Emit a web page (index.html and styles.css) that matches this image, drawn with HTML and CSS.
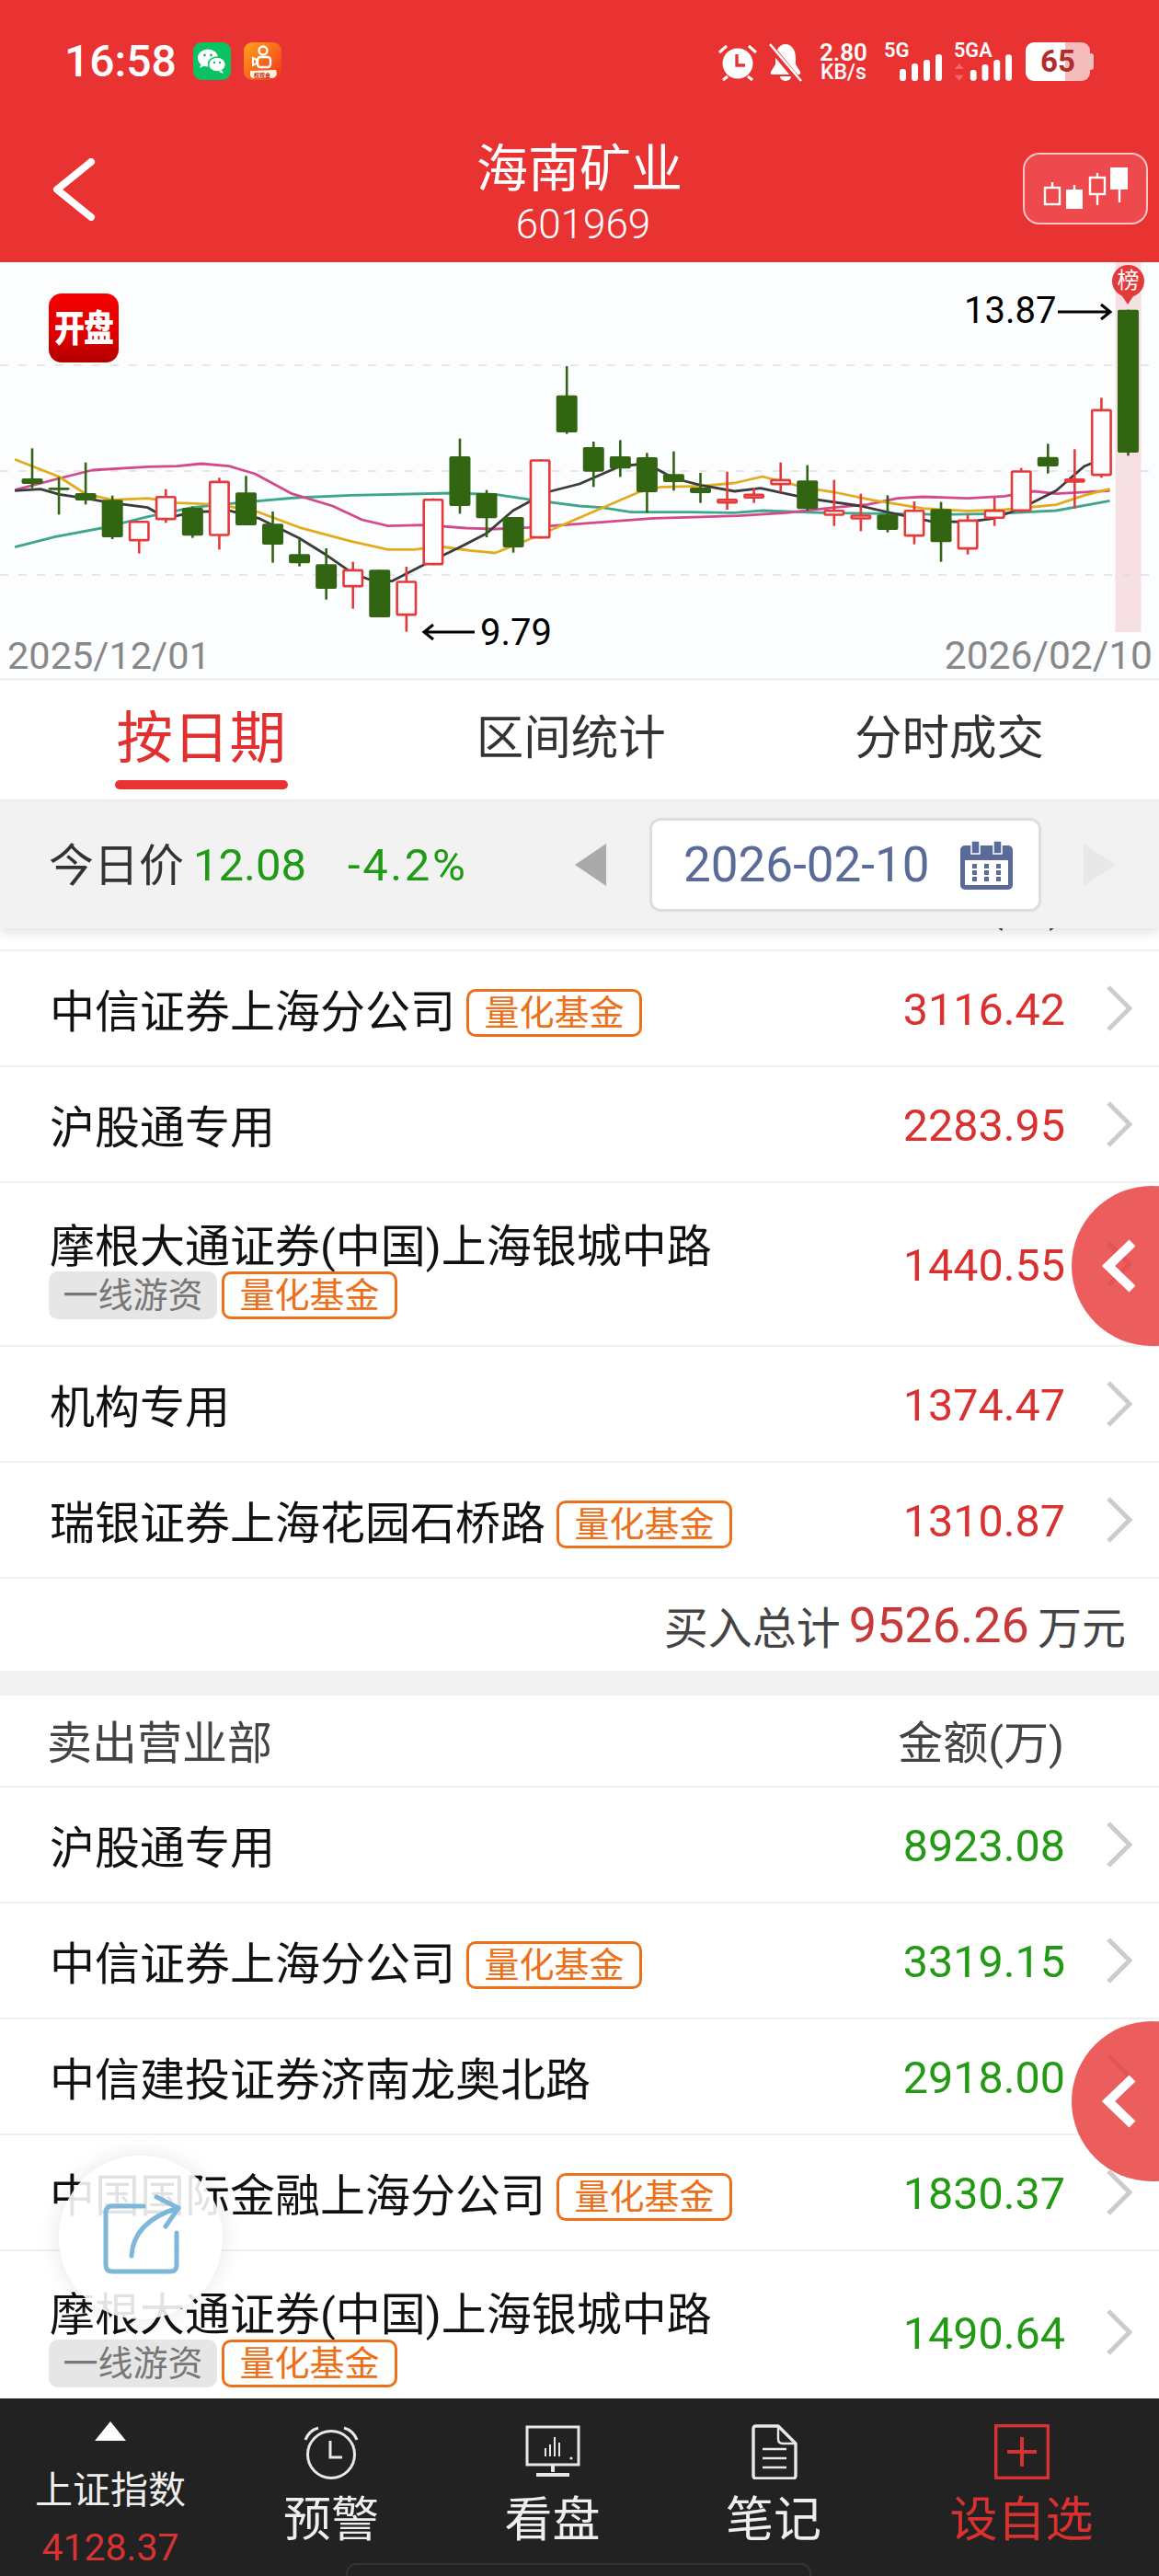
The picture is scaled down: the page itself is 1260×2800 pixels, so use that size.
FILE: index.html
```html
<!DOCTYPE html>
<html lang="zh-CN">
<head>
    <meta charset="UTF-8">
    <meta name="viewport" content="width=device-width, initial-scale=1.0">
    <title>海南矿业 - 龙虎榜</title>
    <link rel="stylesheet" href="styles.css">
</head>
<body>
<div class="page">

    <header class="top">
        <div class="status">
            <span class="clock">16:58</span>
            <svg class="app-icon" viewBox="0 0 41 41">
                <rect width="41" height="41" rx="9" fill="#0ac262"/>
                <ellipse cx="16" cy="17" rx="11" ry="9.5" fill="#fff"/>
                <path d="M9 23l-2 5 6-3z" fill="#fff"/>
                <ellipse cx="26" cy="24" rx="9.5" ry="8" fill="#fff" stroke="#0ac262" stroke-width="1.5"/>
                <path d="M31 30l2 4-5-2z" fill="#fff"/>
                <circle cx="12.5" cy="14" r="1.4" fill="#0ac262"/>
                <circle cx="19.5" cy="14" r="1.4" fill="#0ac262"/>
                <circle cx="23" cy="22" r="1.2" fill="#0ac262"/>
                <circle cx="29" cy="22" r="1.2" fill="#0ac262"/>
            </svg>
            <svg class="app-icon app-icon-second" viewBox="0 0 41 41">
                <defs>
                    <linearGradient id="kuai" x1="0" y1="0" x2="1" y2="1">
                        <stop offset="0" stop-color="#ffa51a"/>
                        <stop offset="1" stop-color="#f2301f"/>
                    </linearGradient>
                </defs>
                <rect width="41" height="41" rx="9" fill="url(#kuai)"/>
                <circle cx="21" cy="9" r="4.5" fill="none" stroke="#fff" stroke-width="2.4"/>
                <rect x="15" y="16" width="14" height="11" rx="3" fill="none" stroke="#fff" stroke-width="2.4"/>
                <path d="M14 19l-4-2v8l4-2z" fill="none" stroke="#fff" stroke-width="2"/>
                <path d="M7 31l28-1 1 4q-1 5-6 5H11q-4 0-4-4z" fill="#fff3dc"/>
                <text class="mini-label" x="20" y="37.5">权现金</text>
            </svg>

            <div class="status-right">
                <svg class="icon-alarm" viewBox="0 0 44 44">
                    <circle cx="22" cy="23" r="16.5" fill="#fff"/>
                    <path d="M21 13v12h9" fill="none" stroke="#e93333" stroke-width="3.4"/>
                    <path d="M2 11l8-7M42 11l-8-7M6 41l5-4M38 41l-5-4" stroke="#fff" stroke-width="3"/>
                </svg>
                <svg class="icon-bell" viewBox="0 0 38 44">
                    <path d="M19 2c-7 0-11 7-11 15v7l-5 8q-1 3 2 3h28q3 0 2-3l-5-8v-7c0-8-4-15-11-15z" fill="#fff"/>
                    <path d="M13 37a6 5 0 0 0 12 0z" fill="#fff"/>
                    <path d="M2 4l33 40" stroke="#e93333" stroke-width="7"/>
                    <path d="M2 2l34 40" stroke="#fff" stroke-width="2.6"/>
                </svg>
                <div class="speed"><b>2.80</b><span>KB/s</span></div>
                <svg class="icon-sim" viewBox="0 0 64 44">
                    <text class="sim-text" x="0" y="16">5G</text>
                    <rect x="17" y="29" width="7" height="13" rx="3" fill="#fff"/>
                    <rect x="30" y="23" width="7" height="19" rx="3" fill="#fff"/>
                    <rect x="43" y="19" width="7" height="23" rx="3" fill="#fff"/>
                    <rect x="56" y="13" width="7" height="29" rx="3" fill="#fff"/>
                </svg>
                <svg class="icon-sim" viewBox="0 0 65 44">
                    <text class="sim-text" x="0" y="16">5GA</text>
                    <path d="M6 23l5 6H1zM6 42l5-6H1z" fill="#f2696b"/>
                    <rect x="18" y="30" width="7" height="12" rx="3" fill="#fff"/>
                    <rect x="31" y="24" width="7" height="18" rx="3" fill="#fff"/>
                    <rect x="44" y="19" width="7" height="23" rx="3" fill="#fff"/>
                    <rect x="57" y="13" width="7" height="29" rx="3" fill="#fff"/>
                </svg>
                <div class="battery">65</div>
            </div>
        </div>

        <div class="titlebar">
            <svg class="back" viewBox="0 0 48 68">
                <path d="M43 4L6 34l37 30" fill="none" stroke="#fff" stroke-width="8" stroke-linecap="round" stroke-linejoin="round"/>
            </svg>
            <div class="title">
                <h1>海南矿业</h1>
                <p>601969</p>
            </div>
            <div class="kline-btn">
                <svg viewBox="1115 168 132 74">
                    <g fill="none" stroke="#fff" stroke-width="2.4">
                        <rect x="1137" y="204" width="16" height="18"/>
                        <rect x="1186" y="193" width="16" height="18"/>
                    </g>
                    <g stroke="#fff" stroke-width="2.4">
                        <path d="M1145 198v6M1169 201v6M1194 188v5M1194 211v12M1218 206v14"/>
                    </g>
                    <rect x="1160" y="206" width="18" height="21" fill="#fff"/>
                    <rect x="1208" y="182" width="19" height="24" fill="#fff"/>
                </svg>
            </div>
        </div>
    </header>

    <section class="chart">
        <svg id="klineChart" class="chart-svg" viewBox="0 285 1260 452"></svg>
        <div class="open-badge"><span>开盘</span></div>
        <div class="pin">榜</div>
        <span class="mark mark-high">13.87</span>
        <span class="mark mark-low">9.79</span>
        <span class="axis-date axis-start">2025/12/01</span>
        <span class="axis-date axis-end">2026/02/10</span>
    </section>

    <nav class="tabs">
        <a class="tab tab-on">按日期</a>
        <a class="tab">区间统计</a>
        <a class="tab">分时成交</a>
    </nav>

    <div class="daybar">
        <span class="day-label">今日价</span>
        <span class="day-price">12.08</span>
        <span class="day-change">-4.2%</span>
        <i class="tri tri-left"></i>
        <div class="datebox">
            <span>2026-02-10</span>
            <svg class="calendar" viewBox="0 0 57 53">
                <rect x="0" y="5" width="57" height="48" rx="5" fill="#5a6b99"/>
                <rect x="12" y="0" width="9" height="14" fill="#5a6b99" stroke="#fff" stroke-width="1.5"/>
                <rect x="36" y="0" width="9" height="14" fill="#5a6b99" stroke="#fff" stroke-width="1.5"/>
                <rect x="5" y="21" width="47" height="27" fill="#fff"/>
                <g fill="#5a6b99">
                    <rect x="13" y="25" width="5" height="5"/><rect x="26" y="25" width="5" height="5"/><rect x="39" y="25" width="5" height="5"/>
                    <rect x="13" y="32" width="5" height="5"/><rect x="26" y="32" width="5" height="5"/><rect x="39" y="32" width="5" height="5"/>
                    <rect x="13" y="39" width="5" height="5"/><rect x="26" y="39" width="5" height="5"/><rect x="39" y="39" width="5" height="5"/>
                </g>
            </svg>
        </div>
        <i class="tri tri-right"></i>
    </div>

    <main class="list">
        <div class="list-scroll">
            <div class="row row-head row-head-first">
                <span class="head-name">买入营业部</span>
                <span class="head-amount">金额(万)</span>
            </div>
            <div class="row">
                <div class="name">中信证券上海分公司<span class="tag tag-quant">量化基金</span></div>
                <span class="value up">3116.42</span>
                <svg class="chev" viewBox="0 0 28 50"><path d="M2 2l23 23L2 48"/></svg>
            </div>
            <div class="row">
                <div class="name">沪股通专用</div>
                <span class="value up">2283.95</span>
                <svg class="chev" viewBox="0 0 28 50"><path d="M2 2l23 23L2 48"/></svg>
            </div>
            <div class="row row-tall">
                <div class="name-stack">
                    <div class="name">摩根大通证券(中国)上海银城中路</div>
                    <div class="tags"><span class="tag tag-hot">一线游资</span><span class="tag tag-quant">量化基金</span></div>
                </div>
                <span class="value up">1440.55</span>
                <svg class="chev" viewBox="0 0 28 50"><path d="M2 2l23 23L2 48"/></svg>
            </div>
            <div class="row">
                <div class="name">机构专用</div>
                <span class="value up">1374.47</span>
                <svg class="chev" viewBox="0 0 28 50"><path d="M2 2l23 23L2 48"/></svg>
            </div>
            <div class="row">
                <div class="name">瑞银证券上海花园石桥路<span class="tag tag-quant">量化基金</span></div>
                <span class="value up">1310.87</span>
                <svg class="chev" viewBox="0 0 28 50"><path d="M2 2l23 23L2 48"/></svg>
            </div>
            <div class="total">买入总计<b>9526.26</b>万元</div>

            <div class="row row-head">
                <span class="head-name">卖出营业部</span>
                <span class="head-amount">金额(万)</span>
            </div>
            <div class="row">
                <div class="name">沪股通专用</div>
                <span class="value down">8923.08</span>
                <svg class="chev" viewBox="0 0 28 50"><path d="M2 2l23 23L2 48"/></svg>
            </div>
            <div class="row">
                <div class="name">中信证券上海分公司<span class="tag tag-quant">量化基金</span></div>
                <span class="value down">3319.15</span>
                <svg class="chev" viewBox="0 0 28 50"><path d="M2 2l23 23L2 48"/></svg>
            </div>
            <div class="row">
                <div class="name">中信建投证券济南龙奥北路</div>
                <span class="value down">2918.00</span>
                <svg class="chev" viewBox="0 0 28 50"><path d="M2 2l23 23L2 48"/></svg>
            </div>
            <div class="row">
                <div class="name">中国国际金融上海分公司<span class="tag tag-quant">量化基金</span></div>
                <span class="value down">1830.37</span>
                <svg class="chev" viewBox="0 0 28 50"><path d="M2 2l23 23L2 48"/></svg>
            </div>
            <div class="row row-tall">
                <div class="name-stack">
                    <div class="name">摩根大通证券(中国)上海银城中路</div>
                    <div class="tags"><span class="tag tag-hot">一线游资</span><span class="tag tag-quant">量化基金</span></div>
                </div>
                <span class="value down">1490.64</span>
                <svg class="chev" viewBox="0 0 28 50"><path d="M2 2l23 23L2 48"/></svg>
            </div>
        </div>
    </main>

    <footer class="bottom">
        <div class="nav-item nav-index">
            <i class="nav-tri"></i>
            <span class="index-name">上证指数</span>
            <span class="index-value">4128.37</span>
        </div>
        <div class="nav-item">
            <svg class="nav-icon" viewBox="0 0 60 60" fill="none" stroke="#e8e8e8" stroke-width="3">
                <circle cx="30" cy="33" r="25.5"/>
                <path d="M29 18v18h13"/>
                <path d="M2 17q4-10 14-13M58 17q-4-10-14-13"/>
            </svg>
            <span>预警</span>
        </div>
        <div class="nav-item">
            <svg class="nav-icon" viewBox="0 0 60 60" fill="none" stroke="#e8e8e8" stroke-width="3">
                <rect x="2" y="3" width="56" height="41"/>
                <path d="M30 44v8M12 55h36" stroke-width="4"/>
                <path d="M22 26v9M27 22v13M32 14v21M37 20v15" stroke-width="2"/>
                <circle cx="50" cy="37" r="1.6" fill="#e8e8e8" stroke="none"/>
            </svg>
            <span>看盘</span>
        </div>
        <div class="nav-item">
            <svg class="nav-icon" viewBox="0 0 60 60" fill="none" stroke="#e8e8e8" stroke-width="3.4">
                <path d="M8 5q0-3 3-3h24l19 19v35q0 3-3 3H11q-3 0-3-3z" stroke-linejoin="round"/>
                <path d="M35 2v14q0 5 5 5h14" stroke-width="2.4"/>
                <path d="M18 27h26M18 37h26M18 47h26" stroke-width="2.6"/>
            </svg>
            <span>笔记</span>
        </div>
        <div class="nav-item nav-add">
            <svg class="nav-icon" viewBox="0 0 60 60" fill="none" stroke="#d93030" stroke-width="3.4">
                <rect x="1.7" y="1.7" width="56.6" height="56.6"/>
                <path d="M14 30h32M30 14v32" stroke-width="4"/>
            </svg>
            <span>设自选</span>
        </div>
        <div class="home-line"></div>
    </footer>

    <div class="side-btn side-btn-top">
        <svg viewBox="0 0 40 60"><path d="M34 5L8 30l26 25" fill="none" stroke="#fff" stroke-width="10"/></svg>
    </div>
    <div class="side-btn side-btn-bottom">
        <svg viewBox="0 0 40 60"><path d="M34 5L8 30l26 25" fill="none" stroke="#fff" stroke-width="10"/></svg>
    </div>

    <div class="share">
        <svg viewBox="0 0 90 90" fill="none" stroke="#7db7d9" stroke-width="5" stroke-linecap="round" stroke-linejoin="round">
            <path d="M46 13H12q-7 0-7 7v57q0 7 7 7h63q7 0 7-7V42"/>
            <path d="M33 67q2-37 50-52"/>
            <path d="M60 3l24 12-14 20"/>
        </svg>
    </div>
</div>

<script>
    // zoomed pixel readings: x is 2.489 per px, y is 3 per px from the top of the crop at 280
    const scaleX = v => v / 2.489;
    const scaleY = v => 280 + v / 3;

    // [wick top, body top, body bottom, wick bottom, up?]
    const candles = [
        [622, 720, 738, 752, 0], [716, 750, 758, 838, 0], [668, 768, 792, 805, 0],
        [776, 790, 912, 918, 0], [858, 858, 925, 965, 1], [755, 777, 856, 865, 1],
        [812, 816, 907, 914, 0], [718, 728, 908, 952, 1], [712, 766, 873, 873, 0],
        [828, 868, 936, 995, 0], [918, 967, 997, 1007, 0], [948, 1000, 1080, 1115, 0],
        [992, 1016, 1075, 1145, 1], [1018, 1018, 1173, 1173, 0], [1008, 1054, 1168, 1220, 1],
        [785, 786, 1003, 1003, 1], [590, 648, 810, 835, 0], [758, 768, 850, 912, 0],
        [846, 846, 945, 962, 0], [658, 658, 916, 916, 1], [354, 449, 570, 575, 0],
        [600, 618, 698, 748, 0], [595, 648, 688, 715, 0], [637, 651, 765, 832, 0],
        [632, 706, 732, 760, 0], [702, 750, 768, 800, 0], [698, 786, 802, 822, 1],
        [750, 770, 786, 800, 1], [668, 722, 742, 765, 1], [677, 727, 820, 825, 0],
        [725, 822, 842, 875, 1], [770, 838, 854, 892, 1], [775, 838, 888, 896, 0],
        [795, 822, 910, 935, 1], [797, 820, 928, 992, 0], [838, 854, 952, 968, 1],
        [783, 822, 852, 875, 1], [686, 694, 828, 832, 1], [607, 650, 681, 704, 0],
        [625, 720, 734, 818, 1], [457, 494, 712, 718, 1], [170, 170, 636, 646, 0]
    ];

    const right = 1568;
    const lines = [
        { color: "#3fa68d", pts: [[40,944],[150,910],[275,882],[400,845],[520,815],[640,800],[800,783],[950,775],[1220,768],[1340,772],[1440,790],[1568,810],[right+60,815],[right+140,830],[right+300,830],[right+420,832],[right+495,825],[right+660,832],[right+833,835],[right+977,838],[right+1122,835],[right+1290,825],[right+1435,793]] },
        { color: "#d34a8a", pts: [[40,758],[160,720],[250,693],[400,682],[480,680],[545,672],[620,680],[690,705],[790,770],[900,810],[980,855],[1050,875],[1150,872],[1260,882],[1340,885],[1430,880],[1568,868],[right+200,850],[right+430,842],[right+560,832],[right+689,815],[right+780,805],[right+860,785],[right+930,780],[right+1050,785],[right+1150,778],[right+1230,762],[right+1290,770],[right+1435,760]] },
        { color: "#e2ac1c", pts: [[40,658],[160,715],[231,770],[303,790],[400,785],[480,800],[594,805],[700,830],[810,880],[950,925],[1050,952],[1120,952],[1190,942],[1270,955],[1340,963],[1420,925],[1568,848],[right+160,765],[right+220,748],[right+328,745],[right+420,735],[right+495,714],[right+617,752],[right+689,765],[right+790,790],[right+930,818],[right+1050,826],[right+1150,822],[right+1290,806],[right+1366,775],[right+1435,754]] },
        { color: "#3b3b3b", pts: [[40,760],[110,755],[160,772],[230,785],[303,800],[400,815],[450,850],[522,830],[620,825],[700,850],[810,915],[883,970],[955,1030],[1000,1050],[1060,1055],[1150,1000],[1243,945],[1316,900],[1388,825],[1480,765],[1568,738],[right+110,680],[right+182,672],[right+256,720],[right+328,742],[right+420,762],[right+490,752],[right+617,785],[right+761,810],[right+833,830],[right+950,860],[right+1050,862],[right+1122,850],[right+1194,818],[right+1290,760],[right+1366,680],[right+1435,648]] }
    ];

    let svg = '<rect x="1212.5" y="285" width="28" height="402" fill="#f6e0e4"/>';

    [397, 512, 625].forEach(y => {
        svg += `<line x1="0" x2="1260" y1="${y}" y2="${y}" stroke="#dedede" stroke-width="1.5" stroke-dasharray="9 11"/>`;
    });

    lines.forEach(line => {
        let pts = line.pts.map(p => scaleX(p[0]).toFixed(1) + "," + scaleY(p[1]).toFixed(1)).join(" ");
        svg += `<polyline points="${pts}" fill="none" stroke="${line.color}" stroke-width="2.8" stroke-linejoin="round"/>`;
    });

    candles.forEach((c, i) => {
        let x = 35 + 29.06 * i;
        let top = scaleY(c[1]);
        let bottom = scaleY(c[2]);
        let color = c[4] ? "#e53a3a" : "#326511";
        svg += `<line x1="${x}" x2="${x}" y1="${scaleY(c[0])}" y2="${scaleY(c[3])}" stroke="${color}" stroke-width="2.6"/>`;
        if (c[4]) {
            svg += `<rect x="${x - 10.2}" y="${top + 1.2}" width="20.4" height="${Math.max(bottom - top - 2.4, 1)}" rx="1" fill="#fcfdff" stroke="${color}" stroke-width="2.6"/>`;
        } else {
            svg += `<rect x="${x - 11.5}" y="${top}" width="23" height="${bottom - top}" rx="2" fill="${color}"/>`;
        }
    });

    // high and low markers
    svg += '<path d="M1150 339h56M1197 331l10 8-10 8" fill="none" stroke="#000" stroke-width="3"/>';
    svg += '<path d="M516 687h-54M471 679l-10 8 10 8" fill="none" stroke="#000" stroke-width="3"/>';

    document.getElementById("klineChart").innerHTML = svg;
</script>
</body>
</html>
```

FILE: styles.css
```css
* {
    box-sizing: border-box;
    margin: 0;
    padding: 0;
}
body {
    font-family: Roboto, "Noto Sans CJK SC", sans-serif;
    background-color: #fff;
    color: #111;
}
.page {
    position: relative;
    display: flex;
    flex-direction: column;
    width: 1260px;
    height: 2800px;
    overflow: hidden;
}

/* red header */
.top {
    height: 285px;
    background-color: #e93333;
    color: #fff;
}
.status {
    display: flex;
    align-items: flex-start;
    height: 135px;
    padding: 46px 0 0 70px;
}
.clock {
    font-size: 48px;
    font-weight: 500;
    line-height: 42px;
    width: 140px;
}
.app-icon {
    width: 41px;
    height: 41px;
}
.app-icon-second {
    margin-left: 14px;
}
.mini-label {
    font-size: 6px;
    font-weight: 700;
    fill: #c8261b;
    text-anchor: middle;
}
.status-right {
    display: flex;
    align-items: flex-start;
    margin-left: 474px;
}
.icon-alarm {
    width: 44px;
    height: 44px;
}
.icon-bell {
    width: 38px;
    height: 44px;
    margin-left: 11px;
}
.speed {
    display: flex;
    flex-direction: column;
    width: 58px;
    margin-left: 15px;
    text-align: center;
    line-height: 22px;
}
.speed b {
    font-size: 26px;
    font-weight: 600;
}
.speed span {
    font-size: 23px;
    font-weight: 500;
}
.icon-sim {
    width: 64px;
    height: 44px;
    margin-left: 15px;
}
.icon-sim + .icon-sim {
    margin-left: 12px;
}
.sim-text {
    font-size: 22px;
    font-weight: 600;
    fill: #fff;
}
.battery {
    position: relative;
    width: 70px;
    height: 42px;
    margin-left: 14px;
    border-radius: 9px;
    background: linear-gradient(90deg, #fff 62%, #f6bcbc 62%);
    color: #b22c2c;
    font-size: 33px;
    font-weight: 700;
    line-height: 42px;
    padding-left: 16px;
}
.battery::after {
    content: "";
    position: absolute;
    right: -4px;
    top: 12px;
    width: 4px;
    height: 18px;
    border-radius: 0 3px 3px 0;
    background-color: #f6bcbc;
}

.titlebar {
    display: grid;
    grid-template-columns: 1fr auto 1fr;
    align-items: start;
    padding: 0 12px 0 56px;
}
.back {
    width: 48px;
    height: 68px;
    margin-top: 37px;
}
.title {
    text-align: center;
    margin-left: -44px;
    padding-top: 17px;
}
.title h1 {
    font-size: 56px;
    font-weight: 400;
    line-height: 64px;
}
.title p {
    font-size: 44px;
    font-weight: 300;
    line-height: 50px;
    margin-top: 3px;
    margin-left: 8px;
}
.kline-btn {
    justify-self: end;
    width: 136px;
    height: 78px;
    margin-top: 31px;
    border: 2px solid #f5c4c4;
    border-radius: 18px;
    background-color: #ee4a4d;
}
.kline-btn svg {
    display: block;
    width: 100%;
    height: 100%;
}

/* k-line chart, a free canvas */
.chart {
    position: relative;
    height: 455px;
    background-color: #fcfdff;
    border-bottom: 3px solid #f0f0f0;
}
.chart-svg {
    display: block;
    width: 1260px;
    height: 452px;
}
.open-badge {
    position: absolute;
    left: 53px;
    top: 34px;
    display: flex;
    align-items: center;
    justify-content: center;
    width: 76px;
    height: 75px;
    border-radius: 14px;
    background: linear-gradient(180deg, #f50000 0%, #e00000 60%, #b00000 100%);
}
.open-badge span {
    color: #fff;
    font-size: 33px;
    font-weight: 900;
    line-height: 1;
    letter-spacing: -1px;
    transform: scaleY(1.22);
}
.pin {
    position: absolute;
    left: 1209px;
    top: 3px;
    width: 35px;
    height: 35px;
    border-radius: 50%;
    background-color: #e53a3a;
    color: #fff;
    font-size: 24px;
    line-height: 35px;
    text-align: center;
}
.pin::after {
    content: "";
    position: absolute;
    left: 9px;
    top: 31px;
    border-left: 8.5px solid transparent;
    border-right: 8.5px solid transparent;
    border-top: 12px solid #e53a3a;
}
.mark {
    position: absolute;
    font-size: 40px;
    line-height: 40px;
    color: #000;
}
.mark-high {
    left: 1048px;
    top: 33px;
}
.mark-low {
    left: 522px;
    top: 383px;
}
.axis-date {
    position: absolute;
    top: 407px;
    line-height: 41px;
    color: #888;
}
.axis-start {
    left: 8px;
    font-size: 41.5px;
}
.axis-end {
    right: 7px;
    font-size: 42.5px;
}

/* tabs */
.tabs {
    display: flex;
    justify-content: space-between;
    height: 129px;
    padding: 0 125px;
    background-color: #fff;
}
.tab {
    position: relative;
    font-size: 51.5px;
    line-height: 126px;
    color: #333;
}
.tab-on {
    font-size: 61.5px;
    padding: 0 1.5px;
    color: #e03030;
}
.tab-on::after {
    content: "";
    position: absolute;
    left: 0;
    right: 0;
    top: 108px;
    height: 10px;
    border-radius: 5px;
    background-color: #e93333;
}

/* today's price bar */
.daybar {
    position: relative;
    z-index: 2;
    display: flex;
    align-items: center;
    height: 140px;
    padding-left: 53px;
    background-color: #f2f2f2;
    border-top: 2px solid #ececec;
    box-shadow: 0 6px 10px rgba(0, 0, 0, 0.1);
}
.day-label {
    font-size: 49px;
    color: #333;
    width: 157px;
    margin-bottom: 8px;
}
.day-price,
.day-change {
    font-size: 49px;
    color: #1f9a14;
}
.day-price {
    width: 168px;
}
.day-change {
    width: 247px;
    letter-spacing: 2.6px;
}
.tri {
    width: 0;
    height: 0;
    border-top: 23px solid transparent;
    border-bottom: 23px solid transparent;
}
.tri-left {
    border-right: 34px solid #aaa;
}
.tri-right {
    margin-left: 46px;
    border-left: 35px solid #e8e8e8;
}
.datebox {
    display: flex;
    align-items: center;
    justify-content: space-between;
    width: 426px;
    height: 102px;
    margin-left: 47px;
    padding: 0 28px 0 34px;
    border: 3px solid #ddd;
    border-radius: 12px;
    background-color: #fff;
    color: #5a6b99;
    font-size: 53px;
}
.calendar {
    width: 57px;
    height: 53px;
}

/* broker list */
.list {
    flex: 1;
    min-height: 0;
    overflow: hidden;
}
.list-scroll {
    margin-top: -75px;
}
.row {
    display: flex;
    align-items: center;
    height: 126px;
    padding: 0 29px 0 54px;
    border-bottom: 2px solid #f0f0f0;
    background-color: #fff;
}
.row-tall {
    height: 178px;
}
.row-head {
    justify-content: space-between;
    height: 100px;
    padding: 0 103px 4px 51px;
    font-size: 49px;
    color: #444;
}
.row-head-first {
    padding-bottom: 8px;
}
.name {
    flex: 1;
    display: flex;
    align-items: center;
    padding-top: 10px;
    font-size: 49px;
    line-height: 58px;
    white-space: nowrap;
    color: #111;
}
.name-stack {
    flex: 1;
    padding-top: 3px;
}
.name-stack .name {
    padding-top: 12px;
    line-height: 53px;
}
.tags {
    display: flex;
    gap: 5px;
    margin-left: -1px;
}
.tag {
    display: inline-block;
    height: 52px;
    padding: 0 16.5px;
    border-radius: 10px;
    font-size: 38px;
    line-height: 46px;
    white-space: nowrap;
}
.tag-quant {
    border: 3px solid #ec7019;
    color: #ec7019;
}
.name > .tag-quant {
    margin-left: 12px;
}
.tag-hot {
    padding: 3px 15.5px;
    background-color: #e6e6e6;
    color: #777;
}
.value {
    padding-top: 3px;
    font-size: 48.5px;
    margin-right: 45px;
}
.up {
    color: #d93030;
}
.down {
    color: #229a14;
}
.chev {
    width: 28px;
    height: 50px;
    fill: none;
    stroke: #ccc;
    stroke-width: 5;
}
.total {
    display: flex;
    align-items: center;
    justify-content: flex-end;
    height: 127px;
    padding-right: 36px;
    background-color: #fff;
    font-size: 48px;
    color: #444;
    border-bottom: 27px solid #f2f2f2;
}
.total b {
    margin: 0 9px;
    font-size: 54px;
    font-weight: 400;
    color: #c8393a;
}

/* bottom bar */
.bottom {
    position: relative;
    z-index: 3;
    display: grid;
    grid-template-columns: 240px 240px 241px 240px 1fr;
    height: 193px;
    background-color: #222;
    color: #eee;
}
.nav-item {
    display: flex;
    flex-direction: column;
    align-items: center;
    padding-top: 28px;
    font-size: 52px;
    line-height: 60px;
}
.nav-icon {
    width: 60px;
    height: 60px;
    margin-bottom: 15px;
}
.nav-add {
    color: #d93030;
}
.nav-index {
    padding-top: 25px;
}
.nav-tri {
    width: 0;
    height: 0;
    border-left: 17.5px solid transparent;
    border-right: 17.5px solid transparent;
    border-bottom: 21px solid #fff;
}
.index-name {
    margin-top: 27px;
    font-size: 41px;
    line-height: 54px;
}
.index-value {
    margin-top: 11px;
    font-size: 41px;
    line-height: 48px;
    color: #d63333;
}
.home-line {
    position: absolute;
    left: 376px;
    bottom: -8px;
    width: 506px;
    height: 22px;
    border: 2px solid #333;
    border-radius: 11px;
}

/* floating buttons */
.side-btn {
    position: absolute;
    left: 1165px;
    display: flex;
    align-items: center;
    width: 174px;
    height: 174px;
    padding-left: 32px;
    border-radius: 50%;
    background-color: rgba(232, 58, 58, 0.82);
}
.side-btn svg {
    width: 40px;
    height: 60px;
}
.side-btn-top {
    top: 1289px;
}
.side-btn-bottom {
    top: 2197px;
}
.share {
    position: absolute;
    left: 64px;
    top: 2343px;
    width: 178px;
    height: 178px;
    padding: 42px 42px 0 46px;
    border-radius: 50%;
    background-color: rgba(255, 255, 255, 0.88);
    box-shadow: 0 0 24px rgba(0, 0, 0, 0.1);
}
.share svg {
    display: block;
    width: 90px;
    height: 90px;
}
```
